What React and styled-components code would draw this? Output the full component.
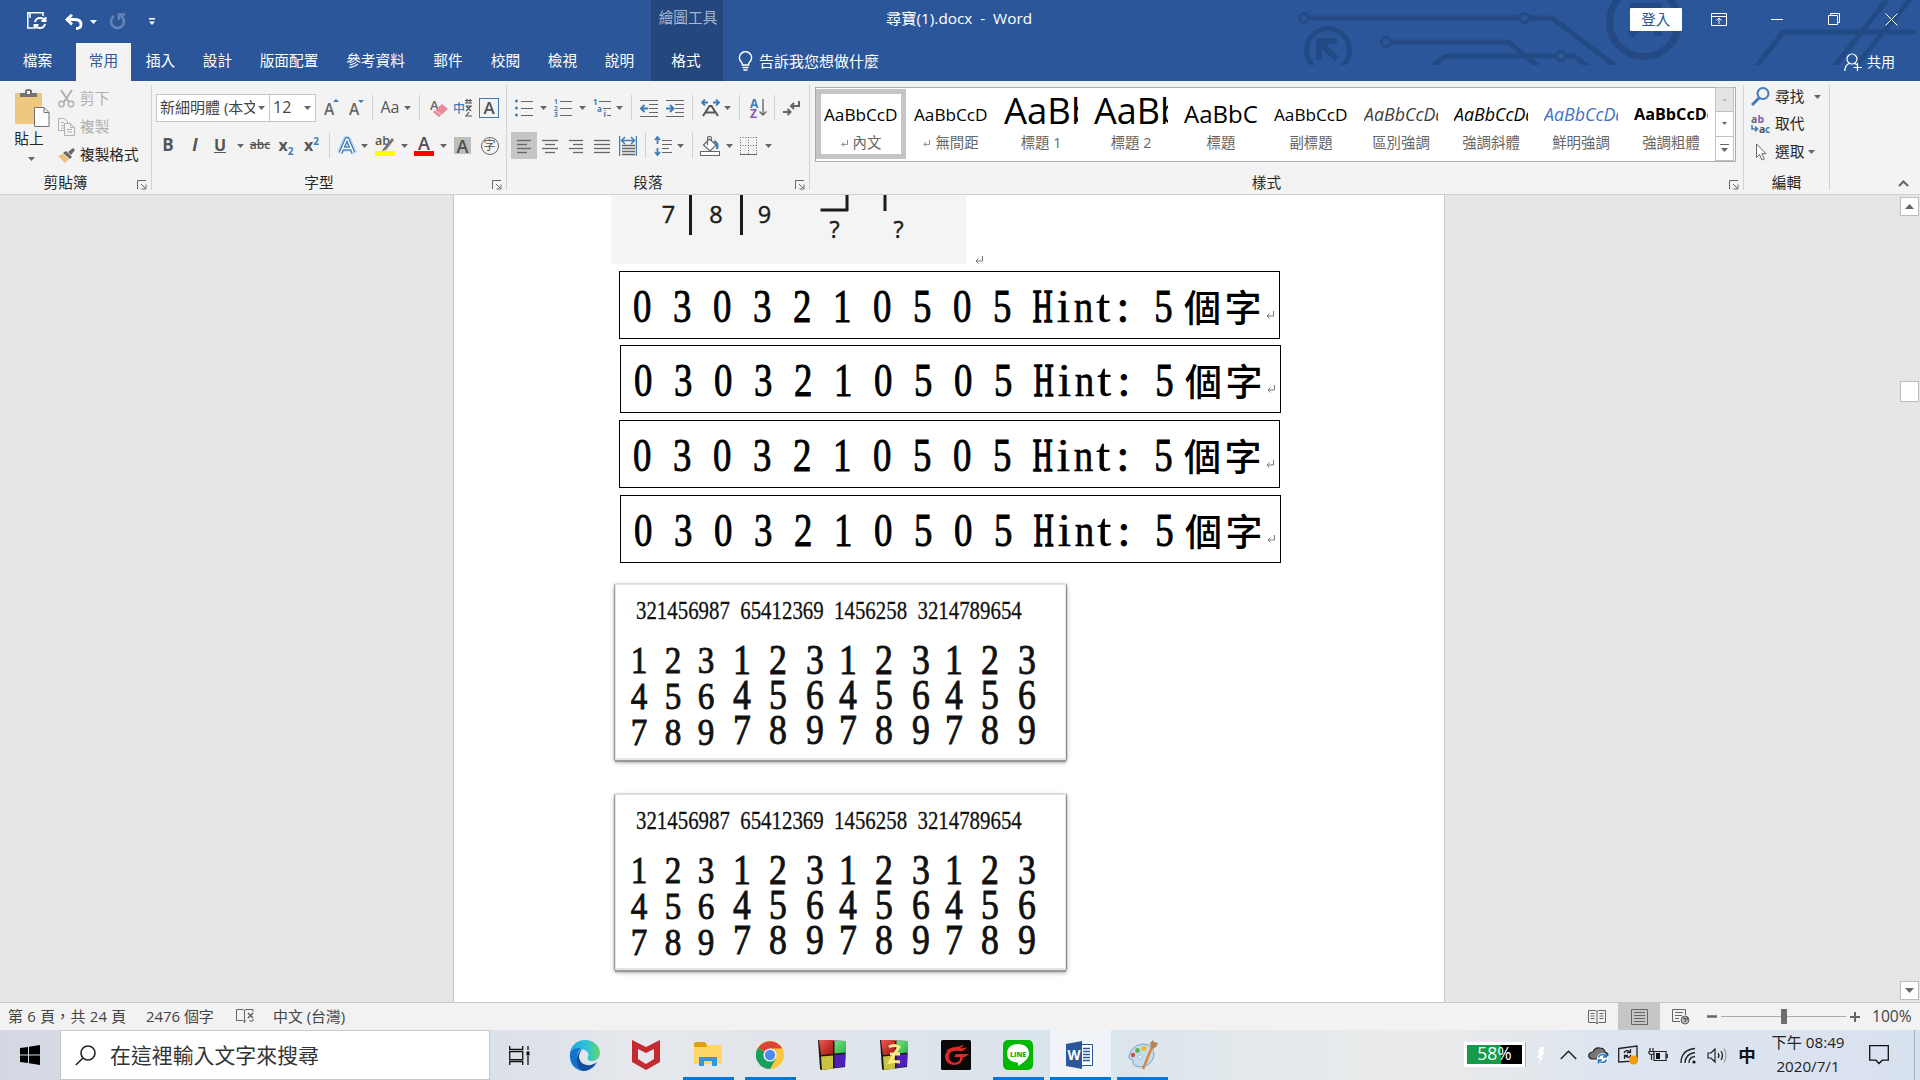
import React from "react";
import styled, { createGlobalStyle, css } from "styled-components";

const UI = `"Open Sans", "Noto Sans CJK TC", sans-serif`;
const SERIF = `"Liberation Serif", "Noto Sans CJK TC", serif`;
const INK = "#666";
const BLUE = "#3f7cb8";

const Global = createGlobalStyle`
  * { box-sizing: border-box; }
  html, body { margin: 0; padding: 0; overflow: hidden; background: #e6e6e6; }
  svg { display: block; flex: none; }
`;

const Screen = styled.div`
  width: 1920px;
  height: 1080px;
  display: flex;
  flex-direction: column;
  overflow: hidden;
  font-family: ${UI};
  font-size: 14.67px;
  line-height: 20px;
  color: #262626;
  white-space: nowrap;
`;

/* ---------- header ---------- */
const Header = styled.header`
  position: relative;
  height: 81px;
  flex: none;
  background: #2b579a;
  color: #fff;
`;
const Circuit = styled.svg`
  position: absolute;
  top: 0;
  right: 0;
`;
const TitleRow = styled.div`
  position: relative;
  display: flex;
  height: 43px;
`;
const QuickAccess = styled.div`
  display: flex;
  align-items: center;
  width: 651px;
  padding-left: 20px;
`;
const ContextTitle = styled.div`
  width: 72px;
  padding: 7px 0 0 2px;
  text-align: center;
  background: #24477d;
  color: #a5b8d3;
`;
const DocTitle = styled.div`
  margin-left: 163px;
  padding-top: 8px;
  font-size: 15.3px;
  white-space: pre;
`;
const LoginButton = styled.button`
  margin: 8px 9px 0 auto;
  width: 52px;
  height: 23px;
  padding: 0;
  border: 0;
  border-radius: 1px;
  background: #fff;
  color: #2b579a;
  font: 14.5px/22px ${UI};
`;
const WindowButton = styled.div`
  display: grid;
  place-items: center;
  width: 57.3px;
  height: 38px;
`;
const TabRow = styled.nav`
  position: relative;
  display: flex;
  height: 38px;
`;
const Tab = styled.div`
  width: ${(p) => p.$w || 57}px;
  line-height: 34px;
  text-align: center;
  ${(p) => p.$active && css`
    width: 55px;
    margin: 0 1px;
    background: #f3f3f3;
    color: #2b579a;
  `}
  ${(p) => p.$context && css`
    width: 72px;
    margin-left: 3px;
    padding-right: 2px;
    background: #24477d;
  `}
`;
const TellMe = styled.div`
  display: flex;
  align-items: center;
  gap: 6px;
  margin-left: 15px;
  padding-bottom: 2px;
  font-size: 15px;
`;
const Share = styled.div`
  display: flex;
  align-items: center;
  gap: 4px;
  margin: 0 25px 0 auto;
  font-size: 14px;
`;

/* ---------- ribbon ---------- */
const Ribbon = styled.section`
  display: flex;
  height: 114px;
  flex: none;
  background: #f3f3f3;
  border-bottom: 1px solid #cfcfcf;
`;
const Group = styled.div`
  width: ${(p) => p.$w}px;
  display: flex;
  flex-direction: column;
`;
const GroupRule = styled.div`
  width: 1px;
  margin: 4px 0;
  background: #d2d2d2;
`;
const GroupFooter = styled.div`
  display: flex;
  align-items: center;
  height: 24px;
  margin-top: auto;
  text-align: center;
`;
const GroupName = styled.div`
  flex: 1;
`;
const Launcher = styled.div`
  width: 20px;
  padding: 5px 0 0 6px;
`;
const Tools = styled.div`
  display: flex;
  flex-direction: column;
  gap: 11px;
  padding: 13px 0 0 4px;
`;
const ToolRow = styled.div`
  display: flex;
  align-items: center;
  height: 27px;
`;
const Tool = styled.div`
  flex: none;
  display: flex;
  align-items: center;
  justify-content: center;
  width: ${(p) => p.$w}px;
  height: 27px;
  margin-left: ${(p) => p.$gap || 0}px;
  background: ${(p) => (p.$active ? "#c5c5c5" : "transparent")};
`;
const Rule = styled.div`
  width: 1px;
  height: 25px;
  background: #d0d0d0;
`;
const Combo = styled.div`
  flex: none;
  display: flex;
  align-items: center;
  justify-content: space-between;
  width: ${(p) => p.$w}px;
  height: 28px;
  margin-right: ${(p) => (p.$joined ? -1 : 0)}px;
  padding: 0 4px 0 3px;
  border: 1px solid #c6c6c6;
  background: #fff;
  color: #444;
`;
const ComboText = styled.div`
  width: ${(p) => p.$w}px;
  height: 22px;
  overflow: hidden;
  font-size: ${(p) => p.$size}px;
`;
const Letter = styled.span`
  font-family: "Open Sans", sans-serif;
  font-size: ${(p) => p.$size || 18}px;
  font-weight: ${(p) => p.$weight || 700};
  font-style: ${(p) => p.$style || "normal"};
  text-decoration: ${(p) => p.$line || "none"};
  text-decoration-thickness: 1px;
  margin-top: -2px;
  color: #555;
  sub, sup { font-size: 10px; color: ${BLUE}; line-height: 0; }
`;
const Boxed = styled.div`
  display: grid;
  place-items: center;
  width: ${(p) => p.$w}px;
  height: ${(p) => p.$h}px;
  border: ${(p) => p.$border || "0"};
  border-radius: ${(p) => (p.$round ? "50%" : "0")};
  background: ${(p) => p.$bg || "transparent"};
  font: ${(p) => p.$weight || 600} ${(p) => p.$size}px/1 ${UI};
  color: #505050;
`;
const Marked = styled.div`
  display: flex;
  align-items: flex-start;
  justify-content: center;
  width: 20px;
  height: 20px;
  margin-top: 1px;
  border-bottom: 5px solid ${(p) => p.$c};
  font: 600 18px/14px ${UI};
  color: #505050;
`;
const Clipboard = styled.div`
  display: flex;
`;
const Paste = styled.div`
  display: flex;
  flex-direction: column;
  align-items: center;
  width: 58px;
  padding-top: 8px;
`;
const PasteArt = styled.div`
  margin-left: 6px;
`;
const PasteArrow = styled.div`
  margin: 9px 0 0 4px;
`;
const ClipList = styled.div`
  padding-top: 4px;
`;
const ClipItem = styled.div`
  display: flex;
  align-items: center;
  gap: 5px;
  height: 28px;
  color: ${(p) => (p.$off ? "#b0b0b0" : "#262626")};
`;
const ClipText = styled.span`
  margin-top: -2px;
`;
const Gallery = styled.div`
  display: flex;
  width: 921px;
  height: 75px;
  margin: 6px 0 0 5px;
  border: 1px solid #ababab;
  background: #fff;
`;
const StyleItem = styled.div`
  width: 90px;
  height: 70px;
  margin-top: 1px;
  padding: ${(p) => (p.$on ? "0 3px" : "5px 8px")};
  border: ${(p) => (p.$on ? "5px solid #c5c5c5" : "0")};
  text-align: center;
  color: #666;
`;
const Sample = styled.div`
  width: 74px;
  height: 39px;
  overflow: hidden;
  text-align: left;
  font: ${(p) => p.$style || "normal"} ${(p) => p.$weight || 400} ${(p) => p.$size || 17.2}px/${(p) => p.$lh || 41}px "Open Sans", sans-serif;
  color: ${(p) => p.$c || "#000"};
`;
const StyleName = styled.div`
  display: flex;
  justify-content: center;
  align-items: center;
  gap: 5px;
  font-size: 14.4px;
  line-height: 20px;
`;
const GalleryButtons = styled.div`
  width: 19px;
  margin: 0 -1px;
  display: flex;
  flex-direction: column;
`;
const GalleryButton = styled.div`
  display: grid;
  place-items: center;
  flex: 1;
  border: 1px solid #c0c0c0;
  margin-top: -1px;
  background: ${(p) => (p.$off ? "#e4e4e4" : "#fff")};
`;
const EditList = styled.div`
  padding: 2px 0 0 7px;
`;
const EditItem = styled.div`
  display: flex;
  align-items: center;
  gap: 5px;
  height: 27.5px;
`;
const EditArrow = styled.div`
  margin-left: ${(p) => p.$gap}px;
`;
const Collapse = styled.div`
  margin: auto 11px 7px auto;
`;

/* ---------- document ---------- */
const Workspace = styled.main`
  display: flex;
  height: 807px;
  flex: none;
  background: #e6e6e6;
`;
const Page = styled.article`
  width: 992px;
  margin: 0 auto 0 453px;
  border: solid #c6c6c6;
  border-width: 0 1px;
  background: #fff;
  overflow: hidden;
`;
const PictureLine = styled.div`
  display: flex;
  align-items: flex-end;
  gap: 9px;
  height: 69px;
  padding-left: 157px;
`;
const Picture = styled.div`
  width: 355px;
  height: 69px;
  background: #f4f4f4;
`;
const HintBox = styled.div`
  display: flex;
  align-items: center;
  width: 661px;
  height: 68px;
  margin: ${(p) => p.$top}px 0 0 ${(p) => p.$left}px;
  padding: 3px 0 0 13px;
  border: 1px solid #000;
  font-family: ${SERIF};
  font-size: 46px;
  line-height: 58px;
  color: #000;
  -webkit-text-stroke: 0.9px #000;
`;
const Digits = styled.div`
  width: 400px;
  span {
    display: inline-block;
    transform: scaleX(0.8);
    transform-origin: left;
    letter-spacing: 7.75px;
  }
`;
const Mono = styled.div`
  display: grid;
  justify-content: center;
  width: 20px;
  span {
    transform: scaleX(${(p) => p.$s});
    -webkit-text-stroke-width: ${(p) => p.$ink || 0.9}px;
  }
`;
const Kanji = styled.div`
  width: 82px;
  margin: 0 0 2px 11px;
  font: 500 37px/54px "Noto Sans CJK TC", sans-serif;
  letter-spacing: 3.5px;
  -webkit-text-stroke: 0;
`;
const EndMark = styled.div`
  margin-top: 16px;
`;
const Spot = styled.div`
  width: 20px;
`;
const Card = styled.div`
  width: 451px;
  height: 176px;
  margin: ${(p) => p.$top}px 0 0 161px;
  padding: 16px 0 0 14px;
  background: #fff;
  border: solid #e4e4e4;
  border-width: 1px 1px 2px;
  box-shadow: 0 2px 1px #999, 0 2px 5px rgba(0, 0, 0, 0.4), -1px 0 1px #bbb, 1px 0 1px #aaa;
  font-family: ${SERIF};
  color: #111;
`;
const CodeLine = styled.div`
  height: 20px;
  margin-left: 6px;
  span {
    display: inline-block;
    font-size: 25px;
    word-spacing: 6.25px;
    line-height: 20px;
    transform: scaleX(0.834);
    transform-origin: left;
    -webkit-text-stroke: 0.3px #111;
  }
`;
const Keypads = styled.div`
  display: flex;
  gap: 14.6px;
  margin-top: 21px;
`;
const Keypad = styled.div`
  display: grid;
  grid-template-columns: repeat(3, 18px);
  grid-auto-rows: ${(p) => (p.$small ? 36 : 35)}px;
  column-gap: ${(p) => (p.$small ? 15.5 : 18.7)}px;
  margin-right: ${(p) => (p.$small ? 3.2 : 0)}px;
  margin-top: ${(p) => (p.$small ? 0 : 1)}px;
  font-size: ${(p) => (p.$small ? 38.5 : 41.5)}px;
  line-height: ${(p) => (p.$small ? 36 : 35)}px;
`;
const Key = styled.div`
  display: grid;
  justify-content: center;
  transform: scaleX(0.86);
  -webkit-text-stroke: 0.9px #111;
`;
const ScrollBar = styled.div`
  display: flex;
  flex-direction: column;
  align-items: center;
  width: 20px;
  padding: 2px 1px 2px 0;
`;
const ScrollPart = styled.div`
  display: grid;
  place-items: center;
  width: 19px;
  height: ${(p) => p.$h}px;
  margin-top: ${(p) => p.$top || 0};
  border: 1px solid #bcbcbc;
  background: #fff;
`;

/* ---------- status bar ---------- */
const StatusBar = styled.footer`
  display: flex;
  align-items: center;
  height: 28px;
  flex: none;
  padding-left: 8px;
  border-top: 1px solid #c6c6c6;
  background: #f2f2f2;
  color: #444;
  font-size: 14.9px;
`;
const StatusText = styled.div`
  width: ${(p) => p.$w}px;
  margin-top: -2px;
  letter-spacing: ${(p) => p.$track || 0}px;
`;
const ViewButton = styled.div`
  display: grid;
  place-items: center;
  width: 42px;
  height: 27px;
  background: ${(p) => (p.$on ? "#c6c6c6" : "transparent")};
`;
const Views = styled.div`
  display: flex;
  margin-left: auto;
`;
const Zoom = styled.div`
  display: flex;
  align-items: center;
  gap: 4px;
  margin-left: 5px;
`;
const Track = styled.div`
  display: grid;
  place-items: center;
  width: 125px;
  height: 15px;
  background: linear-gradient(#ababab, #ababab) center / 100% 1px no-repeat;
`;
const Thumb = styled.div`
  width: 6px;
  height: 15px;
  background: #6f6f6f;
`;
const Percent = styled.div`
  width: 48px;
  margin: -2px 0 0 12px;
  font-size: 15.6px;
`;

/* ---------- taskbar ---------- */
const Taskbar = styled.div`
  display: flex;
  height: 50px;
  flex: none;
  background: linear-gradient(90deg, #d3d8e3 0, #dde2ea 28%, #e6e8ec 33%, #e0e5eb 42%, #d9e4ec 56%, #e6eaec 68%, #ebebea 74%, #dce5ef 84%, #d8e1ee 100%);
  color: #111;
`;
const Start = styled.div`
  display: grid;
  place-items: center;
  width: 60px;
`;
const SearchBox = styled.div`
  display: flex;
  align-items: center;
  gap: 14px;
  width: 430px;
  padding-left: 14px;
  border: 1px solid #c8c8c8;
  background: #fff;
  color: #333;
  font-size: 20.9px;
  line-height: 30px;
`;
const TaskApp = styled.div`
  display: grid;
  place-items: center;
  width: ${(p) => p.$w || 51}px;
  margin-left: ${(p) => p.$gap}px;
  padding-right: 1px;
  background: ${(p) => (p.$active ? "#f0f4f8" : "transparent")};
  box-shadow: ${(p) => (p.$open ? "inset 0 -3px #0078d7" : "none")};
`;
const Tray = styled.div`
  display: flex;
  align-items: center;
  margin-left: auto;
`;
const Battery = styled.div`
  width: 61px;
  height: 25px;
  margin-top: -1px;
  border: 3px solid #fff;
  box-shadow: 1px 0 #aaa;
  background: linear-gradient(90deg, #169a4a 61%, #000 61%);
  color: #fff;
  font-size: 17.5px;
  line-height: 17px;
  text-align: center;
`;
const TrayItem = styled.div`
  display: grid;
  place-items: center;
  width: ${(p) => p.$w}px;
`;
const Ime = styled.div`
  width: 26px;
  text-align: center;
  font-size: 17.5px;
  font-weight: 700;
`;
const Clock = styled.div`
  width: 96px;
  margin-top: -2px;
  text-align: center;
  font-size: 15.2px;
  line-height: 24px;
  color: #222;
`;
const Desktop = styled.div`
  width: 6px;
  height: 50px;
  margin-left: 12px;
  border-left: 1px solid #a9b2bf;
`;

/* ---------- drawings ---------- */
const Svg = ({ w, h, children, ...rest }) => (
  <svg width={w} height={h} viewBox={`0 0 ${w} ${h}`} fill="none" stroke={INK} {...rest}>{children}</svg>
);
const Arrow = ({ c = INK }) => (
  <Svg w={7} h={4} stroke="none"><path d="M0 0h7L3.5 4z" fill={c} /></Svg>
);
const Drop = ({ w, gap }) => <Tool $w={w} $gap={gap}><Arrow /></Tool>;
const Sep = ({ w }) => <Tool $w={w}><Rule /></Tool>;
const LaunchIcon = () => (
  <Svg w={10} h={10}><path d="M.5 9V.5H9M4 4l4 4M9 4.500V9H4.500" /></Svg>
);
const ReturnMark = ({ s = 8 }) => (
  <svg width={s} height={s} viewBox="0 0 8 8" fill="none" stroke="#777"><path d="M7.500 0V5H1M3.500 2.500L1 5l2.500 2.500" /></svg>
);
const Lines = ({ rows, w = 18 }) => (
  <Svg w={w} h={18}>{rows.map(([a, b], i) => <path key={i} d={`M${a} ${3.5 + i * (12 / (rows.length - 1))}H${b}`} strokeWidth="1.3" />)}</Svg>
);

const CircuitArt = () => (
  <Circuit width="680" height="65" viewBox="1240 0 680 65" fill="none" stroke="#244a85" strokeWidth="5">
    <circle cx="1304" cy="18" r="4.500" strokeWidth="3" /><path d="M1309 18H1520M1529 18H1549Q1553 18 1556 21L1618 68" />
    <circle cx="1524.500" cy="18" r="4.500" strokeWidth="3" />
    <circle cx="1328" cy="50" r="21.500" />
    <path d="M1316 41H1337M1319 39V60M1319 42L1337 59" strokeWidth="6" />
    <circle cx="1386" cy="42" r="4.500" strokeWidth="3" /><path d="M1391 42H1505Q1509 42 1512 45L1540 68" />
    <path d="M1431 67L1443 58Q1445 56 1449 56H1557M1565 56H1572Q1575 56 1578 59L1588 67" />
    <circle cx="1561" cy="56" r="4.500" strokeWidth="3" />
    <circle cx="1644" cy="22" r="34.500" strokeWidth="7" />
    <path d="M1630 7H1658V36M1656 9L1630 35" strokeWidth="8" />
    <path d="M1756 67L1781 35Q1783 32 1787 32H1916M1834 67L1889 -3M1855 67L1912 -3" />
  </Circuit>
);

const DiagramArt = () => (
  <svg width="355" height="69" viewBox="611 195 355 69" stroke="#1b1b1b" strokeWidth="3" fill="none">
    <path d="M690.500 190V235M741.500 190V235M820.500 210H848M847 211V190M885 190V211" />
    <g stroke="#1b1b1b" strokeWidth=".4" fill="#1b1b1b" fontFamily="Open Sans, sans-serif" fontSize="23.500" textAnchor="middle">
      <text x="668.500" y="223">7</text><text x="716" y="223">8</text><text x="764.500" y="223">9</text>
      <text x="834.500" y="238">?</text><text x="898.500" y="238">?</text>
    </g>
  </svg>
);

const PasteIcon = () => (
  <Svg w={35} h={39} stroke="none">
    <rect x="0" y="4" width="27" height="31" fill="#edc87e" />
    <path d="M5 8V4h5V2q0-2 3.500-2T17 2v2h5v4z" fill="#737373" /><rect x="12" y="2" width="3" height="3" fill="#f3f3f3" />
    <path d="M19.500 18.500H29l5 5V37.500H19.500z" fill="#fff" stroke="#737373" /><path d="M29 18.500v5h5" stroke="#737373" />
  </Svg>
);
const CutIcon = () => (
  <Svg w={17} h={18} stroke="#b0b0b0" strokeWidth="2"><path d="M3 0l8 12M14 0L6 12" /><circle cx="3.500" cy="14" r="2.700" strokeWidth="1.500" /><circle cx="13" cy="14" r="2.700" strokeWidth="1.500" /></Svg>
);
const CopyIcon = () => (
  <Svg w={17} h={18} stroke="#b0b0b0"><path d="M6 12.500H.5V.5h6l3 3V5M3 4.500h3M3 7.500h3M3 10h3M6.500 5.500h6l4 4v8h-10zM12.500 5.500v4h4M9 11.500h5M9 14h5" /></Svg>
);
const BrushIcon = () => (
  <Svg w={17} h={15} stroke="none"><path d="M0 8l5-2 6 5-4 4z" fill="#edc07a" /><path d="M5 5l3-2 6 6-2 2z" fill="#666" /><path d="M10 4l5-4 2 2-4 5z" fill="#666" /></Svg>
);
const FontSizeIcon = ({ down }) => (
  <Svg w={15} h={18} stroke="none">
    <text x="0" y="16" fontSize="15.500" fontWeight="600" fontFamily="Open Sans" fill="#666">A</text>
    <path d={down ? "M9 1h6l-3 3z" : "M9 3h6l-3-3z"} fill={BLUE} />
  </Svg>
);
const EraserIcon = () => (
  <Svg w={19} h={20} stroke="none"><text x="0" y="12" fontSize="13" fontWeight="600" fontFamily="Open Sans" fill="#666">A</text><path d="M12 6l6 5-9 8-6-5z" fill="#e8899a" /><path d="M5 12l6 5" stroke="#f8d6db" /></Svg>
);
const PhoneticIcon = () => (
  <Svg w={20} h={20} stroke="none">
    <text x="0" y="14.500" fontSize="12" fontFamily="Noto Sans CJK TC" fontWeight="500" fill={BLUE}>中</text>
    <path d="M12 5h7M14 1v4M17 1v4M12 2.500h7M13 8h6M13 13l5-5M13 8l5 5M16 14l-3 4h6" stroke="#555" strokeWidth="1.200" />
  </Svg>
);
const GlowA = () => (
  <Svg w={20} h={20} strokeLinejoin="round"><g stroke="#bcd8f2" strokeWidth="6"><path d="M3 17L9 3h2l6 14M6 12.500h8" /></g><g stroke="#3a78bd" strokeWidth="4"><path d="M3.500 17L9.500 3h1l6 14M6 12.500h8" /></g><g stroke="#fff" strokeWidth="1.500"><path d="M3.500 17L9.500 3h1l6 14M6 12.500h8" /></g></Svg>
);
const HighlightIcon = () => (
  <Svg w={20} h={20} stroke="none"><text x="0" y="9" fontSize="12.500" fontWeight="600" fontFamily="Open Sans" fill="#555">ab</text><path d="M8 13l9-11 2 2-8 10-4 1z" fill="#777" /><rect y="15" width="20" height="5" fill="#ff0" /></Svg>
);
const ListIcon = ({ kind }) => (
  <Svg w={18} h={18}>
    {kind === "dot" && <g fill={BLUE} stroke="none"><circle cx="1.500" cy="2" r="1.500" /><circle cx="1.500" cy="9" r="1.500" /><circle cx="1.500" cy="16" r="1.500" /></g>}
    {kind === "num" && <g fill={BLUE} stroke="none" fontSize="6.500" fontFamily="Open Sans" fontWeight="700"><text x="0" y="5">1</text><text x="0" y="11.500">2</text><text x="0" y="18">3</text></g>}
    {kind === "multi"
      ? <><path d="M6 2.500h12M10 9.500h8M14 16.500h4" /><g fill={BLUE} stroke="none" fontSize="8" fontFamily="Open Sans" fontWeight="700"><text x="0" y="6">1</text><text x="4" y="12.500">a</text><text x="10.500" y="18">i</text></g></>
      : <path d="M6 2.500h12M6 9.500h12M6 16.500h12" />}
  </Svg>
);
const IndentIcon = ({ right }) => (
  <Svg w={18} h={18}><path d="M0 1.500h18M0 17.500h18M9 5.500h9M9 9.500h9M9 13.500h9" /><path d={right ? "M0 9.500h7M4 6l3.500 3.500L4 13" : "M1 9.500h7M4.500 6L1 9.500 4.500 13"} stroke={BLUE} strokeWidth="2" /></Svg>
);
const ScaleIcon = () => (
  <Svg w={19} h={18}><path d="M1 3.500h6M4 .5l-3 3 3 3M12 3.500h6M15 .5l3 3-3 3" stroke={BLUE} strokeWidth="1.800" /><path d="M2 17L8.500 7h2L17 17M5 13.500h9" strokeWidth="2" stroke="#555" /></Svg>
);
const SortIcon = () => (
  <Svg w={17} h={20} stroke="none"><text x="0" y="9.500" fontSize="12" fontWeight="700" fontFamily="Open Sans" fill={BLUE}>A</text><text x="0" y="19.500" fontSize="12" fontWeight="700" fontFamily="Open Sans" fill="#8e5bb0">Z</text><path d="M13 1v16M9.500 13.500L13 17l3.500-3.500" stroke={INK} strokeWidth="1.400" /></Svg>
);
const MarksIcon = () => (
  <Svg w={17} h={16} strokeWidth="2"><path d="M16 1v5H8M11 3L8 6l3 3M0 12h7M4.500 9l3 3-3 3" /></Svg>
);
const DistributeIcon = () => (
  <Svg w={18} h={20}><path d="M.5 0v20M17.500 0v20M3 4.500h12M6 1L2.500 4.500 6 8M12 1l3.500 3.500L12 8" stroke={BLUE} strokeWidth="1.500" /><path d="M3 9.500h13M3 12.500h13M3 15.500h13M3 18.500h13" strokeWidth="1.400" /></Svg>
);
const SpacingIcon = () => (
  <Svg w={18} h={20}><path d="M3.500 1v7M1 4l2.500-3L6 4M3.500 12v7M1 16l2.500 3L6 16" stroke={BLUE} strokeWidth="1.800" /><path d="M8 4.500h10M8 8.500h10M8 12.500h7M8 16.500h10" /></Svg>
);
const BucketIcon = () => (
  <Svg w={20} h={20}><path d="M3.500 9l6-6 6.500 6-6 6zM7.500 9V2.500q0-2 2-2t2 2V6" fill="#fff" strokeWidth="1.200" /><path d="M14 5q4.500 2 3 8" stroke={BLUE} strokeWidth="2.400" /><rect x=".5" y="15.500" width="19" height="4" fill="#fff" /></Svg>
);
const BorderIcon = () => (
  <Svg w={17} h={18}><path d="M.5 0v17M16.500 0v17M8.500 0v17M0 .5h17M0 8.500h17" strokeDasharray="1 1.600" /><path d="M0 17.500h17" /></Svg>
);
const FindIcon = () => <Svg w={19} h={19} stroke={BLUE}><circle cx="12" cy="6.500" r="5.500" strokeWidth="2" /><path d="M8 11l-7 7" strokeWidth="3" /></Svg>;
const ReplaceIcon = () => (
  <Svg w={19} h={19} stroke="none" fontFamily="Open Sans" fontSize="10.500" fontWeight="700"><text x="0" y="8" fill="#666">a</text><text x="6.500" y="8" fill="#8e5bb0">b</text><text x="8" y="18" fill="#555">a</text><text x="14" y="18" fill={BLUE} fontSize="10">c</text><path d="M1 10v4h5M4 11.500L6.500 14 4 16.500" stroke={BLUE} strokeWidth="1.500" /></Svg>
);
const CursorIcon = () => <Svg w={19} h={18}><path d="M5.500 1v13.500l3-3 2.500 5.500 2.300-1-2.500-5.300h4.200z" fill="#fff" /></Svg>;

const EdgeIcon = () => (
  <svg width="31" height="31" viewBox="0 0 31 31">
    <defs><linearGradient id="ea" x1="0" x2="1"><stop stopColor="#1ba6e0" /><stop offset=".55" stopColor="#2fc1d8" /><stop offset="1" stopColor="#63d56a" /></linearGradient></defs>
    <path d="M1 15C1 6 8 0 16 0c9 0 15 6 15 13 0 5-4 8-8 8-5 0-5-2-4-4 2-5-3-8-8-8-5 0-9 3-10 6z" fill="url(#ea)" />
    <path d="M1 13C3 9 8 7 13 9c-5 2-7 9-3 14 3 4 9 6 15 3-3 3-7 5-11 5C6 30 0 24 1 13z" fill="#1373cc" />
    <path d="M13 10c-4 4-4 9 0 13 4 3 10 3 15-1-3 6-9 9-14 9C9 28 7 24 8 18c0-4 2-7 5-8z" fill="#124f9b" />
    <path d="M13 15c1-3 5-3 6 0-1 2-2 5 2 6-5 2-9-2-8-6z" fill="#e3e8ec" />
  </svg>
);
const McAfeeIcon = () => <svg width="28" height="30" viewBox="0 0 28 30"><path d="M0 0l14 7 14-7v22l-14 8-14-8zM6 9v10l8 5 8-5V9l-8 4z" fill="#c42b30" fillRule="evenodd" /></svg>;
const FolderIcon = () => (
  <svg width="28" height="26" viewBox="0 0 28 26"><path d="M0 2q0-2 2-2h9l2 3v4H0z" fill="#dfa10d" /><path d="M0 5h12l2-2h14v19H0z" fill="#ffd768" /><path d="M5 24V15h18v9h-5v-5h-8v5z" fill="#3795dd" /></svg>
);
const ChromeIcon = () => (
  <svg width="28" height="28" viewBox="0 0 28 28"><circle cx="14" cy="14" r="14" fill="#fbc73c" /><path d="M14 14L2 7A14 14 0 0 1 26.200 7.500H14z" fill="#dc4437" /><path d="M14 14L1.800 7A14 14 0 0 0 14 28l6-10.500z" fill="#17a05d" /><circle cx="14" cy="14" r="6.600" fill="#f1f1f1" /><circle cx="14" cy="14" r="5.200" fill="#4c8bf5" /></svg>
);
const CubeIcon = ({ z }) => (
  <svg width="30" height="30" viewBox="0 0 30 30">
    <defs>
      <linearGradient id="cr" y2="1"><stop stopColor="#ee5a50" /><stop offset="1" stopColor="#a01512" /></linearGradient>
      <linearGradient id="cg" y2="1"><stop stopColor="#6fe07c" /><stop offset="1" stopColor="#2cb548" /></linearGradient>
    </defs>
    <path d="M1 0l28 1-1 26-24 3-1-1z" fill="#1d1518" />
    <path d="M2 0h14v14L4 15z" fill="url(#cr)" /><path d="M17.500 1h11.500v11.500l-11.500 1z" fill="url(#cg)" /><path d="M4 16.500l12-1v13L5 30z" fill="#c9c43f" /><path d="M17.500 15l11-1-.5 12-10.500 2z" fill="#4f1fb8" />
    {z && <path d="M10 7q5-3 10 0-5 7-9 15 4-1 10 0M11 14h10" fill="none" stroke="#ffe98a" strokeWidth="3" />}
  </svg>
);
const GarenaIcon = () => (
  <svg width="30" height="30" viewBox="0 0 30 30"><rect width="30" height="30" rx="1.500" fill="#0a0808" /><path d="M4 12Q9 7 15 7q6-1 8-3-1 3-4 4 4 1 7-1-3 5-8 4-8-1-10 4-1 5 3 7 5 2 8-2v-3h-6l2-3h13l-4 3h-2q-1 7-8 8-9 0-10-8 0-4 3-6-2 0-3 1z" fill="#e0282b" /></svg>
);
const LineIcon = () => (
  <svg width="30" height="30" viewBox="0 0 30 30"><rect width="30" height="30" rx="5" fill="#00b900" /><path d="M15 4c7 0 11 4 11 9.500 0 5-5 9-11 12.500v-3.500C8 22 4 19 4 13.500 4 8 8 4 15 4z" fill="#fff" /><text x="15" y="16.500" textAnchor="middle" fontSize="7" fontWeight="800" fontFamily="Open Sans" fill="#00b900">LINE</text></svg>
);
const WordIcon = () => (
  <svg width="28" height="28" viewBox="0 0 28 28"><path d="M14 3.500h12.500v21H14z" fill="#fff" stroke="#2b579a" /><path d="M17 7.500h7M17 10.500h7M17 13.500h7M17 16.500h7M17 19.500h7" stroke="#2b579a" strokeWidth="1.500" /><path d="M0 3l16-3v28L0 25z" fill="#2b579a" /><text x="8" y="19" textAnchor="middle" fontSize="13.500" fontWeight="700" fontFamily="Open Sans" fill="#fff">W</text></svg>
);
const PaintIcon = () => (
  <svg width="31" height="30" viewBox="0 0 31 30">
    <path d="M2 16Q4 6 15 4q12 0 12 11-2 11-14 12-7-1-7-4 1-4-2-4-3 0-2-3z" fill="#c3ddee" stroke="#7ea3bd" />
    <circle cx="6" cy="15" r="2.200" fill="#d64b3f" /><circle cx="10.500" cy="10.500" r="2.400" fill="#5fb14a" /><circle cx="17" cy="8.500" r="2.600" fill="#f2b632" /><circle cx="13" cy="17" r="2" fill="#f5f9fb" stroke="#7ea3bd" strokeWidth=".6" />
    <path d="M25 7L16 29" stroke="#d8873d" strokeWidth="2.500" /><path d="M24 7l-1-4 3-3 1 2 4 1-2 4-3 2z" fill="#b98555" />
  </svg>
);

const STYLES = [
  { name: "內文", mark: true, on: true },
  { name: "無間距", mark: true },
  { name: "標題 1", size: 36.5, lh: 33 },
  { name: "標題 2", size: 36, lh: 33 },
  { name: "標題", size: 24, lh: 39 },
  { name: "副標題" },
  { name: "區別強調", style: "italic", c: "#404040", size: 17.8 },
  { name: "強調斜體", style: "italic", size: 17.8 },
  { name: "鮮明強調", style: "italic", c: "#4472c4", size: 17.8 },
  { name: "強調粗體", weight: 700, size: 16.2 },
];

const Footer = ({ name, launcher = true }) => (
  <GroupFooter><GroupName>{name}</GroupName>{launcher && <Launcher><LaunchIcon /></Launcher>}</GroupFooter>
);

const Hint = ({ top, left }) => (
  <HintBox $top={top} $left={left}>
    <Digits><span>0 3 0 3 2 1 0 5 0 5</span></Digits>
    {[["H", 0.6, 1.6], ["i", 1.05, 0.4], ["n", 0.85, 0.6], ["t", 1.1, 0.3], [":", 1, 0.9]].map(([c, s, ink]) => (
      <Mono key={c} $s={s} $ink={ink}><span>{c}</span></Mono>
    ))}
    <Spot />
    <Mono $s={0.8}><span>5</span></Mono>
    <Kanji>個字</Kanji>
    <EndMark><ReturnMark /></EndMark>
  </HintBox>
);

const PatternCard = ({ top }) => (
  <Card $top={top}>
    <CodeLine><span>321456987 65412369 1456258 3214789654</span></CodeLine>
    <Keypads>
      {[0, 1, 2, 3].map((g) => (
        <Keypad key={g} $small={g === 0}>
          {[1, 2, 3, 4, 5, 6, 7, 8, 9].map((n) => <Key key={n}>{n}</Key>)}
        </Keypad>
      ))}
    </Keypads>
  </Card>
);

export default function App() {
  return (
    <Screen>
      <Global />
      <Header>
        <CircuitArt />
        <TitleRow>
          <QuickAccess>
            <Tool $w={33}><Svg w={20} h={19} stroke="#fff" strokeWidth="1.500"><path d="M6 16H.8V.8H16V4M3 .8V6" /><path d="M8 10q1-4 5-4 4 0 5 3M18.500 5v4h-4M18 12q-1 4-5 4-4 0-5-3M7.500 17v-4h4" strokeWidth="2" /></Svg></Tool>
            <Tool $w={33} $gap={4}><Svg w={18} h={16} stroke="#fff" strokeWidth="2.800"><path d="M2 5.500h8q6 0 6 5 0 4-5 4M7 .8L2 5.500l5 5" /></Svg></Tool>
            <Tool $w={7}><Arrow c="#fff" /></Tool>
            <Tool $w={25} $gap={8}><Svg w={17} h={17} stroke="#6584b5" strokeWidth="2.600"><path d="M5 3a6.500 6.500 0 1 0 7 0M10 7V1.500h6" /></Svg></Tool>
            <Tool $w={14} $gap={15}><Svg w={6} h={8} stroke="#fff"><path d="M0 .8h6" strokeWidth="1.500" /><path d="M0 3.500h6L3 7z" fill="#fff" stroke="none" /></Svg></Tool>
          </QuickAccess>
          <ContextTitle>繪圖工具</ContextTitle>
          <DocTitle>{"尋寶(1).docx  -  Word"}</DocTitle>
          <LoginButton>登入</LoginButton>
          <WindowButton><Svg w={16} h={13} stroke="#fff"><path d="M.5.5h15v12H.5zM.5 3.500h15M8 11V5M5.500 7.500L8 5l2.500 2.500" /></Svg></WindowButton>
          <WindowButton><Svg w={12} h={1} stroke="#fff"><path d="M0 .5h12" /></Svg></WindowButton>
          <WindowButton><Svg w={12} h={12} stroke="#fff"><path d="M.5 2.500h9v9h-9zM2.500 2.500v-2h9v9h-2" /></Svg></WindowButton>
          <WindowButton><Svg w={13} h={13} stroke="#fff"><path d="M.5.5l12 12M12.500.5l-12 12" /></Svg></WindowButton>
        </TitleRow>
        <TabRow>
          <Tab $w={75}>檔案</Tab>
          <Tab $active>常用</Tab>
          <Tab>插入</Tab>
          <Tab>設計</Tab>
          <Tab $w={86}>版面配置</Tab>
          <Tab $w={87}>參考資料</Tab>
          <Tab $w={58}>郵件</Tab>
          <Tab>校閱</Tab>
          <Tab>檢視</Tab>
          <Tab>說明</Tab>
          <Tab $context>格式</Tab>
          <TellMe>
            <Svg w={15} h={20} stroke="#fff" strokeWidth="1.500"><path d="M4.500 14q0-2-2-4a6 6 0 1 1 10 0q-2 2-2 4zM4.500 16.500h6M5.500 19h4" /></Svg>
            告訴我您想做什麼
          </TellMe>
          <Share>
            <Svg w={19} h={19} stroke="#fff" strokeWidth="1.200"><circle cx="8" cy="6" r="5" /><path d="M.8 18q0-5 4-7.500M11 10.500l2 1.500M13.500 10v8M9.500 14.500h8.500" /></Svg>
            共用
          </Share>
        </TabRow>
      </Header>

      <Ribbon>
        <Group $w={151}>
          <Clipboard>
            <Paste>
              <PasteArt><PasteIcon /></PasteArt>
              <span>貼上</span>
              <PasteArrow><Arrow /></PasteArrow>
            </Paste>
            <ClipList>
              <ClipItem $off><CutIcon /><ClipText>剪下</ClipText></ClipItem>
              <ClipItem $off><CopyIcon /><ClipText>複製</ClipText></ClipItem>
              <ClipItem><BrushIcon /><ClipText>複製格式</ClipText></ClipItem>
            </ClipList>
          </Clipboard>
          <Footer name="剪貼簿" />
        </Group>
        <GroupRule />
        <Group $w={354}>
          <Tools>
            <ToolRow>
              <Combo $w={114} $joined><ComboText $w={95} $size={15}>新細明體 (本文</ComboText><Arrow /></Combo>
              <Combo $w={47}><ComboText $w={30} $size={16}>12</ComboText><Arrow /></Combo>
              <Tool $w={26} $gap={2}><FontSizeIcon /></Tool>
              <Tool $w={24}><FontSizeIcon down /></Tool>
              <Sep w={8} />
              <Tool $w={28}><Letter $size={16} $weight={400}>Aa</Letter></Tool>
              <Drop w={7} />
              <Sep w={17} />
              <Tool $w={22}><EraserIcon /></Tool>
              <Tool $w={26}><PhoneticIcon /></Tool>
              <Tool $w={26}><Boxed $w={20} $h={20} $border="1px solid #3f7cb8" $size={17}>A</Boxed></Tool>
            </ToolRow>
            <ToolRow>
              <Tool $w={24}><Letter $size={17}>B</Letter></Tool>
              <Tool $w={30}><Letter $size={17} $style="italic">I</Letter></Tool>
              <Tool $w={20}><Letter $size={16} $line="underline">U</Letter></Tool>
              <Drop w={20} />
              <Tool $w={20}><Letter $size={12} $weight={600} $line="line-through">abc</Letter></Tool>
              <Tool $w={32}><Letter $size={16}>x<sub>2</sub></Letter></Tool>
              <Tool $w={19}><Letter $size={16}>x<sup>2</sup></Letter></Tool>
              <Sep w={16} />
              <Tool $w={20}><GlowA /></Tool>
              <Drop w={14} />
              <Tool $w={28}><HighlightIcon /></Tool>
              <Drop w={10} />
              <Tool $w={30}><Marked $c="#f00">A</Marked></Tool>
              <Drop w={8} />
              <Tool $w={31}><Boxed $w={17} $h={17} $bg="#bcbcbc" $size={18}>A</Boxed></Tool>
              <Tool $w={23}><Boxed $w={18} $h={18} $border="1px solid #666" $round $size={12} $weight={400}>字</Boxed></Tool>
            </ToolRow>
          </Tools>
          <Footer name="字型" />
        </Group>
        <GroupRule />
        <Group $w={302}>
          <Tools>
            <ToolRow>
              <Tool $w={20} $gap={3}><ListIcon kind="dot" /></Tool>
              <Drop w={18} />
              <Tool $w={22}><ListIcon kind="num" /></Tool>
              <Drop w={16} />
              <Tool $w={24}><ListIcon kind="multi" /></Tool>
              <Drop w={10} />
              <Sep w={15} />
              <Tool $w={20}><IndentIcon /></Tool>
              <Tool $w={24} $gap={4}><IndentIcon right /></Tool>
              <Sep w={11} />
              <Tool $w={25}><ScaleIcon /></Tool>
              <Drop w={8} />
              <Sep w={17} />
              <Tool $w={20}><SortIcon /></Tool>
              <Sep w={13} />
              <Tool $w={20}><MarksIcon /></Tool>
            </ToolRow>
            <ToolRow>
              <Tool $w={26} $active><Lines rows={[[2, 16], [2, 12], [2, 16], [2, 12]]} /></Tool>
              <Tool $w={26}><Lines rows={[[1, 17], [4, 14], [1, 17], [4, 14]]} /></Tool>
              <Tool $w={26}><Lines rows={[[2, 16], [6, 16], [2, 16], [6, 16]]} /></Tool>
              <Tool $w={26}><Lines rows={[[1, 17], [1, 17], [1, 17], [1, 17]]} /></Tool>
              <Tool $w={26}><DistributeIcon /></Tool>
              <Sep w={9} />
              <Tool $w={23} $gap={1}><SpacingIcon /></Tool>
              <Drop w={12} />
              <Sep w={13} />
              <Tool $w={20} $gap={1}><BucketIcon /></Tool>
              <Drop w={18} />
              <Tool $w={21}><BorderIcon /></Tool>
              <Drop w={18} />
            </ToolRow>
          </Tools>
          <Footer name="段落" />
        </Group>
        <GroupRule />
        <Group $w={933}>
          <Gallery>
            {STYLES.map((s) => (
              <StyleItem key={s.name} $on={s.on}>
                <Sample $size={s.size} $lh={s.lh} $style={s.style} $weight={s.weight} $c={s.c}>AaBbCcDd</Sample>
                <StyleName>{s.mark && <ReturnMark s={7} />}{s.name}</StyleName>
              </StyleItem>
            ))}
            <GalleryButtons>
              <GalleryButton $off><Svg w={5} h={3} stroke="none"><path d="M0 3h5L2.500 0z" fill="#bbb" /></Svg></GalleryButton>
              <GalleryButton><Svg w={5} h={3} stroke="none"><path d="M0 0h5L2.500 3z" fill={INK} /></Svg></GalleryButton>
              <GalleryButton><Svg w={9} h={8}><path d="M0 .5h9" /><path d="M1 4h7L4.500 8z" fill={INK} stroke="none" /></Svg></GalleryButton>
            </GalleryButtons>
          </Gallery>
          <Footer name="樣式" />
        </Group>
        <GroupRule />
        <Group $w={85}>
          <EditList>
            <EditItem><FindIcon /><ClipText>尋找</ClipText><EditArrow $gap={5}><Arrow /></EditArrow></EditItem>
            <EditItem><ReplaceIcon /><ClipText>取代</ClipText></EditItem>
            <EditItem><CursorIcon /><ClipText>選取</ClipText><EditArrow $gap={-1}><Arrow /></EditArrow></EditItem>
          </EditList>
          <Footer name="編輯" launcher={false} />
        </Group>
        <GroupRule />
        <Collapse><Svg w={11} h={7} strokeWidth="2"><path d="M1 6l4.500-4.500L10 6" /></Svg></Collapse>
      </Ribbon>

      <Workspace>
        <Page>
          <PictureLine><Picture><DiagramArt /></Picture><ReturnMark /></PictureLine>
          <Hint top={7} left={165} />
          <Hint top={6} left={166} />
          <Hint top={7} left={165} />
          <Hint top={7} left={166} />
          <PatternCard top={21} />
          <PatternCard top={34} />
        </Page>
        <ScrollBar>
          <ScrollPart $h={19}><Svg w={9} h={5} stroke="none"><path d="M0 5h9L4.500 0z" fill={INK} /></Svg></ScrollPart>
          <ScrollPart $h={21} $top="165px" />
          <ScrollPart $h={19} $top="auto"><Svg w={9} h={5} stroke="none"><path d="M0 0h9L4.500 5z" fill={INK} /></Svg></ScrollPart>
        </ScrollBar>
      </Workspace>

      <StatusBar>
        <StatusText $w={138} $track={0.25}>第 6 頁，共 24 頁</StatusText>
        <StatusText $w={90}>2476 個字</StatusText>
        <StatusText $w={37}><Svg w={18} h={16}><path d="M8.500 2.500L7 1.500H.5v11H7l1.500 1.500 1.500-1.500M8.500 2.500V15M8.500 2.500L10 1.500h7V4M17 11v2h-4" /><path d="M12 5l5 5M17 5l-5 5" strokeWidth="1.600" /></Svg></StatusText>
        <StatusText $w={90}>中文 (台灣)</StatusText>
        <Views>
          <ViewButton><Svg w={18} h={16}><path d="M9 2.500L7.500 1.500H.5v12h7L9 15l1.500-1.500h7v-12h-7L9 2.500V15M2.500 4.500h4M2.500 7h4M2.500 9.500h4M11.500 4.500h4M11.500 7h4M11.500 9.500h4" /></Svg></ViewButton>
          <ViewButton $on><Svg w={17} h={16}><path d="M.5.5h16v15H.5zM3 3.500h11M3 6.500h11M3 9.500h11M3 12.500h11" /></Svg></ViewButton>
          <ViewButton><Svg w={18} h={16}><path d="M8 12.500H.5V.5h13V6M3 3.500h8M3 6.500h7M3 9.500h4" /><circle cx="13" cy="11" r="4" fill="#bbb" /><path d="M11 9l3 1-1 3M15 8l1 3" strokeWidth="1.500" /></Svg></ViewButton>
        </Views>
        <Zoom>
          <Svg w={10} h={3}><path d="M0 1.500h10" strokeWidth="2.500" /></Svg>
          <Track><Thumb /></Track>
          <Svg w={10} h={10}><path d="M0 5h10M5 0v10" strokeWidth="2" /></Svg>
        </Zoom>
        <Percent>100%</Percent>
      </StatusBar>

      <Taskbar>
        <Start><svg width="20" height="20" viewBox="0 0 20 20"><path d="M0 3l8-1v7.500H0zM9 1.800L20 0v9.500H9zM0 10.500h8V18l-8-1zM9 10.500h11V20L9 18.200z" fill="#000" /></svg></Start>
        <SearchBox>
          <Svg w={21} h={21} stroke="#222" strokeWidth="1.600"><circle cx="13" cy="8" r="7" /><path d="M8 13L.8 20" /></Svg>
          在這裡輸入文字來搜尋
        </SearchBox>
        <TaskApp $w={44} $gap={8}><Svg w={21} h={19} stroke="#111" strokeWidth="1.300"><path d="M.7 0v3.500h13V0M.7 5.700h13v8H.7zM.7 19v-3.500h13V19M19 0v4M19 10v9" /><path d="M19 5.500v4" strokeWidth="3" /></Svg></TaskApp>
        <TaskApp $gap={17}><EdgeIcon /></TaskApp>
        <TaskApp $gap={11}><McAfeeIcon /></TaskApp>
        <TaskApp $gap={11} $open><FolderIcon /></TaskApp>
        <TaskApp $gap={11} $open><ChromeIcon /></TaskApp>
        <TaskApp $gap={11}><CubeIcon /></TaskApp>
        <TaskApp $gap={11}><CubeIcon z /></TaskApp>
        <TaskApp $gap={11}><GarenaIcon /></TaskApp>
        <TaskApp $gap={11} $open><LineIcon /></TaskApp>
        <TaskApp $w={61} $gap={6} $open $active><WordIcon /></TaskApp>
        <TaskApp $gap={6} $open><PaintIcon /></TaskApp>
        <Tray>
          <Battery>58%</Battery>
          <TrayItem $w={31}><Svg w={8} h={17} stroke="none"><path d="M3 0h5L6 5h2L4 10h2l-4 7 1-6H0l2-5H1z" fill="#fff" /></Svg></TrayItem>
          <TrayItem $w={24}><Svg w={17} h={10} stroke="#222" strokeWidth="1.500"><path d="M.8 9L8.500 1.200 16.200 9" /></Svg></TrayItem>
          <TrayItem $w={36}><Svg w={21} h={18} stroke="#222"><path d="M8 13H4q-4-1-3-4.500Q2 6 5 6q2-5 7-4 4 0 5 4 3 1 3 3L14 12z" fill="#777" strokeWidth="1.200" /><circle cx="14.500" cy="12.500" r="5.500" fill="#fff" stroke="none" /><path d="M10.500 11.500q1-3 4-3 2.500 0 3.500 2M18.500 7.500v3.500H15M18.500 13.500q-1 3-4 3-2.500 0-3.500-2M10.500 17.500V14H14" stroke="#1d76c9" strokeWidth="1.500" /></Svg></TrayItem>
          <TrayItem $w={24}><Svg w={20} h={20} stroke="#222" strokeWidth="1.300"><path d="M.7 3.500L19 1v15L.7 17zM6 8q2-4 6-1M12.500 4v3.500H9M13 10q-2 4-6 1M6.500 14v-3.500H10" /><circle cx="15.500" cy="15" r="4.500" fill="#f79a0c" stroke="none" /></Svg></TrayItem>
          <TrayItem $w={36}><Svg w={20} h={14} stroke="#222" strokeWidth="1.200"><path d="M6 12.500V3.500h12v9zM19.300 6v4M2 0v3M5 0v3M1 3.500h5v2q-2.500 2-5 0zM3.500 6v6" /><rect x="8" y="5" width="4" height="6" fill="#111" stroke="none" /></Svg></TrayItem>
          <TrayItem $w={24}><Svg w={17} h={17} stroke="#222" strokeWidth="1.300"><path d="M1 16Q1 3 15 1.500M5 16Q5 7 15 5.500M9 16q0-6 6-6.500" /><circle cx="14" cy="15" r="1.600" fill="#111" stroke="none" /></Svg></TrayItem>
          <TrayItem $w={34}><Svg w={21} h={17} stroke="#222" strokeWidth="1.200"><path d="M1 6h3l4-4v13l-4-4H1zM11 6q2 2.500 0 5M14 4q3 4.500 0 9" /><path d="M17 1.500q4 7 0 14" stroke="#999" /></Svg></TrayItem>
          <Ime>中</Ime>
          <Clock>下午 08:49<br />2020/7/1</Clock>
          <TrayItem $w={46}><Svg w={20} h={20} stroke="#111" strokeWidth="1.300"><path d="M.7.7h18.600v14.500h-6L10 18.500l-3-3.300H.7z" /></Svg></TrayItem>
          <Desktop />
        </Tray>
      </Taskbar>
    </Screen>
  );
}
